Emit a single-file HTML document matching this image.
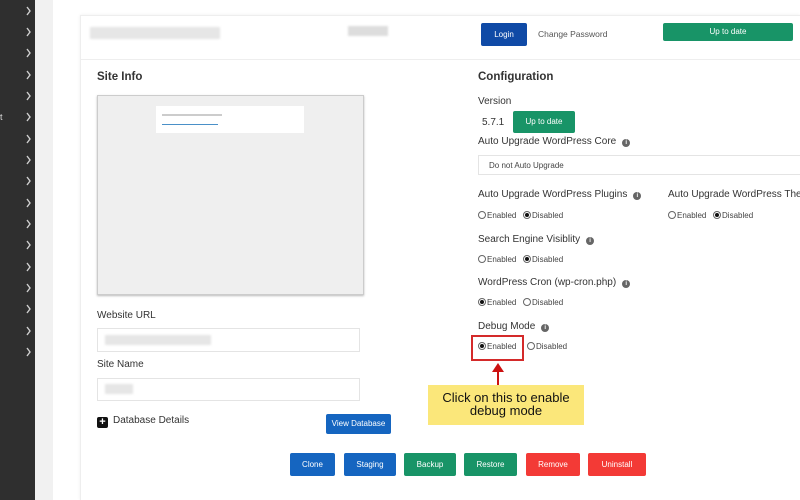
<!DOCTYPE html>
<html style="overflow:hidden;width:800px;height:500px"><head><meta charset="utf-8"><style>
*{box-sizing:border-box;margin:0;padding:0}
body{width:800px;height:500px;overflow:hidden;background:#fff;font-family:"Liberation Sans",sans-serif;color:#333;position:relative}
.a{position:absolute}
.side{left:0;top:0;width:35px;height:500px;background:#2f2f2f}
.chev{position:absolute;left:26px}
.strip{left:35px;top:0;width:18px;height:500px;background:#f1f1f1}
.panel{left:80px;top:15px;width:720px;height:485px;border:1px solid #eee;border-bottom:none;border-right:none;box-shadow:0 0 3px #eee}
.btn{position:absolute;color:#fff;font-size:8px;text-align:center;border-radius:2px}
.blue{background:#1565c0}.green{background:#189467}.red{background:#f33a36}
.t{position:absolute;font-size:10px;color:#333;white-space:nowrap}
.h{font-size:11.5px;font-weight:bold}
.r{position:absolute;font-size:8px;color:#444;white-space:nowrap}
.rc{display:inline-block;width:8px;height:8px;border:1px solid #666;border-radius:50%;vertical-align:-1px;margin-right:1px;position:relative}
.rc.on::after{content:"";position:absolute;left:1px;top:1px;width:4px;height:4px;border-radius:50%;background:#111}
.i{display:inline-block;width:8px;height:8px;border-radius:50%;background:#666;color:#fff;font-size:6px;text-align:center;line-height:8px;font-weight:bold;margin-left:6px;vertical-align:0}
.inp{position:absolute;border:1px solid #e4e4e4;background:#fff}
.blur{position:absolute;background:#e6e6e6;filter:blur(1px)}
</style></head><body>
<div class="a side">
<svg class="chev" style="top:0" width="6" height="370" viewBox="0 0 6 370" fill="none" stroke="#cfcfcf" stroke-width="1.4">
<path d="M1 7l3 4-3 4M1 28l3 4-3 4M1 49l3 4-3 4M1 71l3 4-3 4M1 92l3 4-3 4M1 113l3 4-3 4M1 135l3 4-3 4M1 156l3 4-3 4M1 177l3 4-3 4M1 199l3 4-3 4M1 220l3 4-3 4M1 241l3 4-3 4M1 263l3 4-3 4M1 284l3 4-3 4M1 305l3 4-3 4M1 327l3 4-3 4M1 348l3 4-3 4"/>
</svg>
<span style="position:absolute;left:0;top:112px;color:#ddd;font-size:9px">t</span>
</div>
<div class="a strip"></div>
<div class="a panel"></div>
<div class="a" style="left:80px;top:59px;width:720px;height:1px;background:#eee"></div>
<div class="blur" style="left:90px;top:27px;width:130px;height:12px"></div>
<div class="blur" style="left:348px;top:26px;width:40px;height:10px;background:#ddd"></div>
<div class="btn blue" style="left:481px;top:23px;width:46px;height:23px;line-height:23px;background:#0f4aa6">Login</div>
<div class="t" style="left:538px;top:29px;font-size:8.5px;color:#555">Change Password</div>
<div class="btn green" style="left:663px;top:23px;width:130px;height:18px;line-height:18px">Up to date</div>

<div class="t h" style="left:97px;top:71px">Site Info</div>
<div class="a" style="left:97px;top:95px;width:267px;height:200px;background:#efefef;border:1px solid #ccc;box-shadow:0 1px 2px #bbb"></div>
<div class="a" style="left:156px;top:106px;width:148px;height:27px;background:#fff"></div>
<div class="a" style="left:162px;top:114px;width:60px;height:2px;background:#ccc"></div>
<div class="a" style="left:162px;top:124px;width:56px;height:1px;background:#4a90c8"></div>

<div class="t" style="left:97px;top:310px">Website URL</div>
<div class="inp" style="left:97px;top:328px;width:263px;height:24px"></div>
<div class="blur" style="left:105px;top:335px;width:106px;height:10px"></div>
<div class="t" style="left:97px;top:359px">Site Name</div>
<div class="inp" style="left:97px;top:378px;width:263px;height:23px"></div>
<div class="blur" style="left:105px;top:384px;width:28px;height:10px"></div>
<div class="a" style="left:97px;top:417px;width:11px;height:11px;background:#111;border-radius:2px;color:#fff;font-size:11px;line-height:11px;text-align:center;font-weight:bold">+</div>
<div class="t" style="left:113px;top:415px">Database Details</div>
<div class="btn blue" style="left:326px;top:414px;width:65px;height:20px;line-height:20px">View Database</div>

<div class="t h" style="left:478px;top:71px">Configuration</div>
<div class="t" style="left:478px;top:96px">Version</div>
<div class="t" style="left:482px;top:117px">5.7.1</div>
<div class="btn green" style="left:513px;top:111px;width:62px;height:22px;line-height:22px">Up to date</div>
<div class="t" style="left:478px;top:136px">Auto Upgrade WordPress Core<span class="i">i</span></div>
<div class="inp" style="left:478px;top:155px;width:330px;height:20px"></div>
<div class="r" style="left:489px;top:161px">Do not Auto Upgrade</div>
<div class="t" style="left:478px;top:189px">Auto Upgrade WordPress Plugins<span class="i">i</span></div>
<div class="t" style="left:668px;top:189px">Auto Upgrade WordPress Themes</div>
<div class="r" style="left:478px;top:211px"><span class="rc"></span>Enabled &nbsp;&nbsp;<span class="rc on"></span>Disabled</div>
<div class="r" style="left:668px;top:211px"><span class="rc"></span>Enabled &nbsp;&nbsp;<span class="rc on"></span>Disabled</div>
<div class="t" style="left:478px;top:234px">Search Engine Visiblity<span class="i">i</span></div>
<div class="r" style="left:478px;top:255px"><span class="rc"></span>Enabled &nbsp;&nbsp;<span class="rc on"></span>Disabled</div>
<div class="t" style="left:478px;top:277px">WordPress Cron (wp-cron.php)<span class="i">i</span></div>
<div class="r" style="left:478px;top:298px"><span class="rc on"></span>Enabled &nbsp;&nbsp;<span class="rc"></span>Disabled</div>
<div class="t" style="left:478px;top:321px">Debug Mode<span class="i">i</span></div>
<div class="a" style="left:471px;top:335px;width:53px;height:26px;border:2px solid #d42a2a"></div>
<div class="r" style="left:478px;top:342px"><span class="rc on"></span>Enabled</div>
<div class="r" style="left:527px;top:342px"><span class="rc"></span>Disabled</div>
<div class="a" style="left:497px;top:370px;width:2px;height:15px;background:#c11"></div>
<div class="a" style="left:492px;top:363px;width:0;height:0;border-left:6px solid transparent;border-right:6px solid transparent;border-bottom:9px solid #c11"></div>
<div class="a" style="left:428px;top:385px;width:156px;height:40px;background:#fbe77a;color:#111;font-size:13px;text-align:center;line-height:13px;padding-top:6px">Click on this to enable<br>debug mode</div>

<div class="btn blue" style="left:290px;top:453px;width:45px;height:23px;line-height:23px">Clone</div>
<div class="btn blue" style="left:344px;top:453px;width:52px;height:23px;line-height:23px">Staging</div>
<div class="btn green" style="left:404px;top:453px;width:52px;height:23px;line-height:23px">Backup</div>
<div class="btn green" style="left:464px;top:453px;width:53px;height:23px;line-height:23px">Restore</div>
<div class="btn red" style="left:526px;top:453px;width:54px;height:23px;line-height:23px">Remove</div>
<div class="btn red" style="left:588px;top:453px;width:58px;height:23px;line-height:23px">Uninstall</div>
</body></html>
